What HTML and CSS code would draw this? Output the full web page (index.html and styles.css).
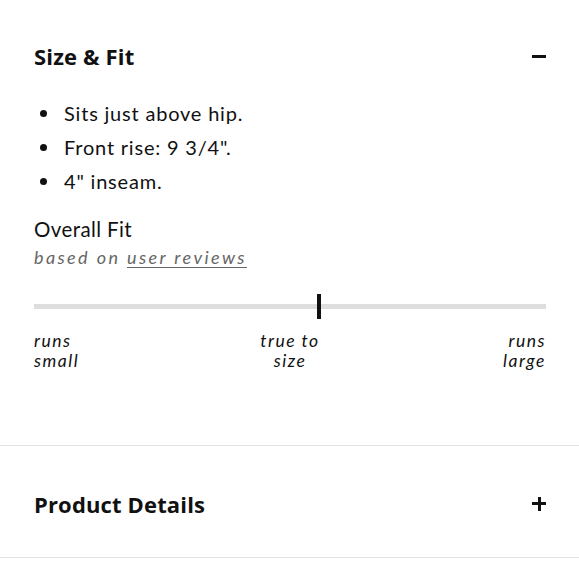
FILE: index.html
```html
<!DOCTYPE html>
<html>
<head>
<meta charset="utf-8">
<link rel="stylesheet" href="styles.css">
</head>
<body>
<section class="acc acc-open">
  <div class="acc-head">
    <h2 class="acc-title">Size &amp; Fit</h2>
    <span class="icon-minus"></span>
  </div>
  <ul class="facts">
    <li>Sits just above hip.</li>
    <li>Front rise: 9 3/4".</li>
    <li>4" inseam.</li>
  </ul>
  <div class="fit">
    <div class="fit-title">Overall Fit</div>
    <div class="fit-sub">based on <a class="fit-link" href="#">user reviews</a></div>
    <div class="scale">
      <div class="track"></div>
      <div class="marker"></div>
    </div>
    <div class="labels">
      <span class="lbl lbl-left">runs<br>small</span>
      <span class="lbl lbl-mid">true to<br>size</span>
      <span class="lbl lbl-right">runs<br>large</span>
    </div>
  </div>
</section>
<section class="acc acc-closed">
  <div class="acc-head">
    <h2 class="acc-title">Product Details</h2>
    <span class="icon-plus"></span>
  </div>
</section>
</body>
</html>
```

FILE: styles.css
```css
html, body {
  margin: 0;
  padding: 0;
  background: #fff;
  color: #111;
  font-family: "Lato", "Open Sans", sans-serif;
}
.acc {
  padding: 0 33px 0 34px;
}
.acc-open {
  padding-top: 40px;
  padding-bottom: 75px;
  border-bottom: 1px solid #e3e3e3;
}
.acc-closed {
  padding-top: 4px;
  border-bottom: 1px solid #e3e3e3;
}
.acc-head {
  display: flex;
  align-items: center;
  justify-content: space-between;
  height: 32px;
}
.acc-closed .acc-head {
  height: 107px;
}
.acc-title {
  margin: 0;
  font-family: "Open Sans", sans-serif;
  font-weight: 700;
  font-size: 22px;
  line-height: 32px;
  letter-spacing: 0.15px;
  color: #111;
}
.icon-minus {
  width: 14px;
  height: 3px;
  background: #111;
}
.icon-plus {
  position: relative;
  width: 14px;
  height: 14px;
}
.icon-plus::before,
.icon-plus::after {
  content: "";
  position: absolute;
  background: #111;
}
.icon-plus::before {
  left: 0;
  top: 5.5px;
  width: 14px;
  height: 3px;
}
.icon-plus::after {
  top: 0;
  left: 5.5px;
  width: 3px;
  height: 14px;
}
.facts {
  margin: 24px 0 0 0;
  padding: 0 0 0 30px;
  font-size: 20px;
  line-height: 34px;
  letter-spacing: 0.8px;
}
.facts li {
  list-style: none;
  position: relative;
}
.facts li::before {
  content: "";
  position: absolute;
  left: -24px;
  top: 14px;
  width: 7px;
  height: 7px;
  border-radius: 50%;
  background: #111;
}
.fit {
  margin-top: 18px;
}
.fit-title {
  font-size: 20.5px;
  line-height: 26px;
  letter-spacing: 0.4px;
}
.fit-sub {
  margin-top: 2px;
  font-size: 18px;
  line-height: 26px;
  font-style: italic;
  color: #666;
  letter-spacing: 2.4px;
}
.fit-link {
  color: #666;
  text-decoration: underline;
  text-underline-offset: 3px;
}
.scale {
  position: relative;
  margin-top: 24px;
  height: 25px;
}
.track {
  position: absolute;
  left: 0;
  right: 0;
  top: 10px;
  height: 5px;
  background: #dedede;
}
.marker {
  position: absolute;
  left: 283px;
  top: 0;
  width: 4px;
  height: 25px;
  background: #111;
}
.labels {
  display: grid;
  grid-template-columns: 1fr auto 1fr;
  margin-top: 12px;
  font-size: 17.5px;
  line-height: 19.5px;
  font-style: italic;
  letter-spacing: 1.5px;
}
.lbl-left { text-align: left; }
.lbl-mid { text-align: center; }
.lbl-right { text-align: right; }
```
